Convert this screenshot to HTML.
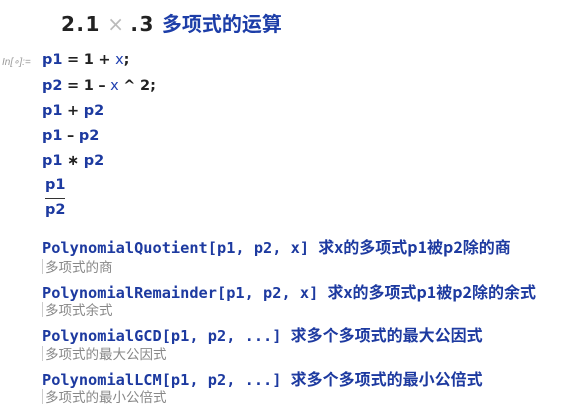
<!DOCTYPE html>
<html><head><meta charset="utf-8"><style>
body{margin:0;background:#fff;width:583px;height:416px;overflow:hidden;position:relative;font-family:"DejaVu Sans","Noto Sans CJK SC",sans-serif}
.a{position:absolute;white-space:nowrap}
.t{font-size:20px;font-weight:bold;color:#222;top:8px;left:61px}
.t .n{letter-spacing:1.5px}
.t .c{color:#1d3ea8;font-family:"Noto Sans CJK SC",sans-serif;font-size:20px}
.t .x{color:#bbb;font-weight:normal}
.in{font-family:"Liberation Sans",sans-serif;font-style:italic;font-size:10px;color:#999;left:2px;top:57px}
.c1{font-size:14.5px;font-weight:bold;color:#222;left:42px;word-spacing:-0.5px}
.b{color:#1d3aa0}
.m{font-family:"DejaVu Sans Mono","Noto Sans CJK SC",monospace;font-size:15.3px;font-weight:bold;color:#1d3aa0;left:42px}
.m .z{font-family:"Noto Sans CJK SC",sans-serif;font-size:16px}
.g{font-family:"Noto Sans CJK SC",sans-serif;font-size:13.5px;color:#888;left:42px;border-left:1px solid #ccc;padding-left:2px;line-height:15px}
</style></head><body>
<div class="a t"><span class="n">2.1</span><span class="x"> × </span><span class="n">.3</span> <span class="c">多项式的运算</span></div>
<div class="a in">In[∘]:=</div>
<div class="a c1" style="top:52px"><span class="b">p1</span> = 1 + <span class="b" style="font-weight:normal;color:#2040b0">x</span>;</div>
<div class="a c1" style="top:78px"><span class="b">p2</span> = 1 – <span class="b" style="font-weight:normal;color:#2040b0">x</span> ^ 2;</div>
<div class="a c1" style="top:103px"><span class="b">p1</span> + <span class="b">p2</span></div>
<div class="a c1" style="top:128px"><span class="b">p1</span> – <span class="b">p2</span></div>
<div class="a c1" style="top:153px"><span class="b">p1</span> ∗ <span class="b">p2</span></div>
<div class="a c1" style="top:177px;left:45px"><span class="b">p1</span></div>
<div class="a" style="top:198px;left:45px;width:20px;height:1px;background:#333"></div>
<div class="a c1" style="top:202px;left:45px"><span class="b">p2</span></div>
<div class="a m" style="top:234px">PolynomialQuotient[p1, p2, x] <span class="z">求x的多项式p1被p2除的商</span></div>
<div class="a g" style="top:259px">多项式的商</div>
<div class="a m" style="top:279px">PolynomialRemainder[p1, p2, x] <span class="z">求x的多项式p1被p2除的余式</span></div>
<div class="a g" style="top:302px">多项式余式</div>
<div class="a m" style="top:322px">PolynomialGCD[p1, p2, ...] <span class="z">求多个多项式的最大公因式</span></div>
<div class="a g" style="top:346px">多项式的最大公因式</div>
<div class="a m" style="top:366px">PolynomialLCM[p1, p2, ...] <span class="z">求多个多项式的最小公倍式</span></div>
<div class="a g" style="top:389px">多项式的最小公倍式</div>
</body></html>
